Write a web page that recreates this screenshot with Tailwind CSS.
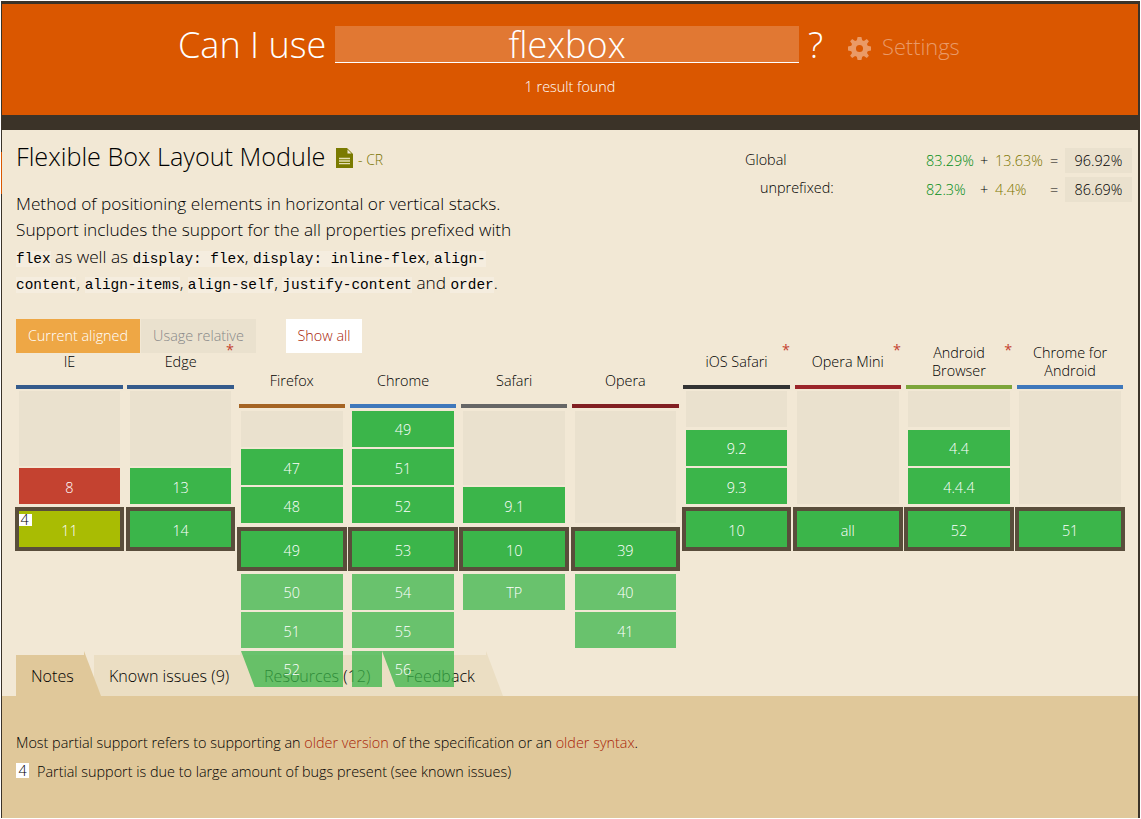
<!DOCTYPE html>
<html lang="en">
<head>
<meta charset="utf-8">
<title>Can I use... flexbox</title>
<script src="https://cdn.jsdelivr.net/npm/@tailwindcss/browser@4"></script>
</head>
<body class="h-[819px] overflow-hidden bg-white font-['Open_Sans',sans-serif] text-black">
<div class="relative ml-px mt-px h-[817px] w-[1139px] bg-[#3b3328] pl-px pr-[2px] pt-[3px]">
  <div class="absolute left-0 top-[151px] h-[42px] w-px bg-[#da5700]"></div>

  <header class="h-[111px] bg-[#da5700] text-white">
    <div class="flex h-[59px] items-start pl-[176px] pt-[22px] text-[36px] font-light leading-[38px]">
      <span class="w-[157px] whitespace-nowrap">Can I use</span>
      <div class="h-[37px] w-[464px] border-b border-white bg-white/20 text-center">flexbox</div>
      <span class="ml-[9px] w-[40px]">?</span>
      <svg class="mt-[11px] size-[23px]" viewBox="-12 -12 24 24" fill="#ea9a66">
        <path fill-rule="evenodd" d="M-2-12H2L2.8-8.6 4.6-7.8 7.6-9.8 9.8-7.6 7.8-4.6 8.6-2.8 12-2V2L8.6 2.8 7.8 4.6 9.8 7.6 7.6 9.8 4.6 7.8 2.8 8.6 2 12H-2L-2.8 8.6-4.6 7.8-7.6 9.8-9.8 7.6-7.8 4.6-8.6 2.8-12 2V-2L-8.6-2.8-7.8-4.6-9.8-7.6-7.6-9.8-4.6-7.8-2.8-8.6ZM0-3.7A3.7 3.7 0 1 0 0 3.7 3.7 3.7 0 1 0 0-3.7Z"/>
      </svg>
      <span class="ml-[11px] mt-[2px] text-[21.8px] text-[#e99a68]">Settings</span>
    </div>
    <div class="pt-[14px] text-center text-[14.4px] font-light leading-5">1 result found</div>
  </header>

  <main class="mt-[15px] flex h-[688px] flex-col bg-[#f2e8d5]">
    <section class="flex h-[189px] pl-[14px]">
      <div class="w-[510px] pt-[9px]">
        <h1 class="flex h-[34px] items-center whitespace-nowrap text-[25.2px] font-light leading-[34px]">
          <span class="w-[320px]">Flexible Box Layout Module</span>
          <svg class="mt-[3px] h-[20px] w-[17px]" viewBox="0 0 17 20"><path fill="#7a7a00" d="M0 0H11L17 6V20H0Z"/><path fill="#f2e8d5" d="M11.5 1.5V5.5H15.5Z"/><path stroke="#e5e0b5" stroke-width="1.3" d="M3 10.5H14M3 13H14M3 15.7H14"/></svg>
          <span class="ml-[5px] mt-[8px] text-[14px] text-[#7a7400]">- CR</span>
        </h1>
        <p class="mt-[18px] whitespace-nowrap text-[17.25px] font-light leading-[26.3px] [&_code]:bg-[#f5eddf] [&_code]:font-['Liberation_Mono',monospace] [&_code]:text-[14.4px] [&_code]:leading-none">Method of positioning elements in horizontal or vertical stacks.<br>Support includes the support for the all properties prefixed with<br><code>flex</code> as well as <code>display: flex</code>, <code>display: inline-flex</code>, <code>align-</code><br><code>content</code>, <code>align-items</code>, <code>align-self</code>, <code>justify-content</code> and <code>order</code>.</p>
      </div>
      <div class="ml-[219px] pt-[18px] text-[14.4px] font-light">
        <div class="flex h-[25px] items-center whitespace-nowrap leading-[25px]">
          <span class="-mt-[2px] w-[181px]">Global</span><span class="w-[54px] text-[#008c14]">83.29%</span><span class="w-[15px]">+</span><span class="w-[55px] text-[#7d7600]">13.63%</span><span class="w-[15px]">=</span><span class="w-[67px] bg-[#eae1ce] text-center">96.92%</span>
        </div>
        <div class="mt-[4px] flex h-[25px] items-center whitespace-nowrap leading-[25px]">
          <span class="-mt-[4px] w-[181px] pl-[15px]">unprefixed:</span><span class="w-[54px] text-[#008c14]">82.3%</span><span class="w-[15px]">+</span><span class="w-[55px] text-[#7d7600]">4.4%</span><span class="w-[15px]">=</span><span class="w-[67px] bg-[#eae1ce] text-center">86.69%</span>
        </div>
      </div>
    </section>

    <nav class="flex h-[34px] pl-[14px] text-center text-[14.4px] font-light leading-[34px]">
      <span class="w-[124px] bg-[#eea745] text-white">Current aligned</span>
      <span class="ml-px w-[115px] bg-[#eae1ce] text-[#888]">Usage relative</span>
      <span class="ml-[30px] w-[76px] bg-white text-[#a82408]">Show all</span>
    </nav>

    <section class="relative z-10 flex h-[302px] pl-[14.2px] text-center text-[14.4px] font-light leading-[18px]">
      <div class="w-[111.2px] shrink-0">
        <div class="mr-[4.7px] h-[36px] border-b-4 border-[#355b8c]">IE</div>
        <div class="ml-[2.5px] w-[101.5px] text-white">
          <div class="mt-[2px] h-[75px] bg-[#eae1ce]"></div>
          <div class="mt-[2px] h-[36px] bg-[#c44230] leading-[40px]">8</div>
          <div class="relative -mx-1 mt-[3px] h-[44px] border-4 border-[#594d3b] bg-[#a9bc03] leading-[39px]">11<span class="absolute left-0 top-[3px] h-[12px] w-[13px] bg-white pr-px leading-[12px] text-black">4</span></div>
        </div>
      </div>
      <div class="w-[111.2px] shrink-0">
        <div class="relative mr-[4.7px] h-[36px] border-b-4 border-[#355b8c]">Edge<span class="absolute -top-[12px] right-0 font-normal text-[#c44230]">*</span></div>
        <div class="ml-[2.5px] w-[101.5px] text-white">
          <div class="mt-[2px] h-[75px] bg-[#eae1ce]"></div>
          <div class="mt-[2px] h-[36px] bg-[#3bb54a] leading-[40px]">13</div>
          <div class="-mx-1 mt-[3px] h-[44px] border-4 border-[#594d3b] bg-[#3bb54a] leading-[39px]">14</div>
        </div>
      </div>
      <div class="w-[111.2px] shrink-0">
        <div class="mr-[4.7px] h-[55px] border-b-4 border-[#a56423] pt-[19px]">Firefox</div>
        <div class="ml-[2.5px] w-[101.5px] text-white">
          <div class="mt-[3px] h-[36px] bg-[#eae1ce]"></div>
          <div class="mt-[2px] h-[36px] bg-[#3bb54a] leading-[40px]">47</div>
          <div class="mt-[2px] h-[36px] bg-[#3bb54a] leading-[40px]">48</div>
          <div class="-mx-1 mt-[4px] h-[44px] border-4 border-[#594d3b] bg-[#3bb54a] leading-[39px]">49</div>
          <div class="mt-[3px] h-[36px] bg-[#3bb54a]/75 leading-[38px]">50</div>
          <div class="mt-[2px] h-[36px] bg-[#3bb54a]/75 leading-[40px]">51</div>
          <div class="mt-[3px] h-[36px] bg-[#3bb54a]/75 leading-[38px]">52</div>
        </div>
      </div>
      <div class="w-[111.2px] shrink-0">
        <div class="mr-[4.7px] h-[55px] border-b-4 border-[#3f78bb] pt-[19px]">Chrome</div>
        <div class="ml-[2.5px] w-[101.5px] text-white">
          <div class="mt-[3px] h-[36px] bg-[#3bb54a] leading-[38px]">49</div>
          <div class="mt-[2px] h-[36px] bg-[#3bb54a] leading-[40px]">51</div>
          <div class="mt-[2px] h-[36px] bg-[#3bb54a] leading-[40px]">52</div>
          <div class="-mx-1 mt-[4px] h-[44px] border-4 border-[#594d3b] bg-[#3bb54a] leading-[39px]">53</div>
          <div class="mt-[3px] h-[36px] bg-[#3bb54a]/75 leading-[38px]">54</div>
          <div class="mt-[2px] h-[36px] bg-[#3bb54a]/75 leading-[40px]">55</div>
          <div class="mt-[3px] h-[36px] bg-[#3bb54a]/75 leading-[38px]">56</div>
        </div>
      </div>
      <div class="w-[111.2px] shrink-0">
        <div class="mr-[4.7px] h-[55px] border-b-4 border-[#666] pt-[19px]">Safari</div>
        <div class="ml-[2.5px] w-[101.5px] text-white">
          <div class="mt-[3px] h-[74px] bg-[#eae1ce]"></div>
          <div class="mt-[2px] h-[36px] bg-[#3bb54a] leading-[40px]">9.1</div>
          <div class="-mx-1 mt-[4px] h-[44px] border-4 border-[#594d3b] bg-[#3bb54a] leading-[39px]">10</div>
          <div class="mt-[3px] h-[36px] bg-[#3bb54a]/75 leading-[38px]">TP</div>
        </div>
      </div>
      <div class="w-[111.2px] shrink-0">
        <div class="mr-[4.7px] h-[55px] border-b-4 border-[#821f22] pt-[19px]">Opera</div>
        <div class="ml-[2.5px] w-[101.5px] text-white">
          <div class="mt-[3px] h-[112px] bg-[#eae1ce]"></div>
          <div class="-mx-1 mt-[4px] h-[44px] border-4 border-[#594d3b] bg-[#3bb54a] leading-[39px]">39</div>
          <div class="mt-[3px] h-[36px] bg-[#3bb54a]/75 leading-[38px]">40</div>
          <div class="mt-[2px] h-[36px] bg-[#3bb54a]/75 leading-[40px]">41</div>
        </div>
      </div>
      <div class="w-[111.2px] shrink-0">
        <div class="relative mr-[4.7px] h-[36px] border-b-4 border-[#333]">iOS Safari<span class="absolute -top-[12px] right-0 font-normal text-[#c44230]">*</span></div>
        <div class="ml-[2.5px] w-[101.5px] text-white">
          <div class="mt-[2px] h-[36px] bg-[#eae1ce]"></div>
          <div class="mt-[3px] h-[36px] bg-[#3bb54a] leading-[38px]">9.2</div>
          <div class="mt-[2px] h-[36px] bg-[#3bb54a] leading-[40px]">9.3</div>
          <div class="-mx-1 mt-[3px] h-[44px] border-4 border-[#594d3b] bg-[#3bb54a] leading-[39px]">10</div>
        </div>
      </div>
      <div class="w-[111.2px] shrink-0">
        <div class="relative mr-[4.7px] h-[36px] border-b-4 border-[#9b252a]">Opera Mini<span class="absolute -top-[12px] right-0 font-normal text-[#c44230]">*</span></div>
        <div class="ml-[2.5px] w-[101.5px] text-white">
          <div class="mt-[2px] h-[113px] bg-[#eae1ce]"></div>
          <div class="-mx-1 mt-[3px] h-[44px] border-4 border-[#594d3b] bg-[#3bb54a] leading-[39px]">all</div>
        </div>
      </div>
      <div class="w-[111.2px] shrink-0">
        <div class="relative mr-[4.7px] flow-root h-[36px] border-b-4 border-[#7da53a]"><div class="-mt-[9px]">Android<br>Browser</div><span class="absolute -top-[12px] right-0 font-normal text-[#c44230]">*</span></div>
        <div class="ml-[2.5px] w-[101.5px] text-white">
          <div class="mt-[2px] h-[36px] bg-[#eae1ce]"></div>
          <div class="mt-[3px] h-[36px] bg-[#3bb54a] leading-[38px]">4.4</div>
          <div class="mt-[2px] h-[36px] bg-[#3bb54a] leading-[40px]">4.4.4</div>
          <div class="-mx-1 mt-[3px] h-[44px] border-4 border-[#594d3b] bg-[#3bb54a] leading-[39px]">52</div>
        </div>
      </div>
      <div class="w-[111.2px] shrink-0">
        <div class="mr-[4.7px] flow-root h-[36px] border-b-4 border-[#3f78bb]"><div class="-mt-[9px]">Chrome for<br>Android</div></div>
        <div class="ml-[2.5px] w-[101.5px] text-white">
          <div class="mt-[2px] h-[113px] bg-[#eae1ce]"></div>
          <div class="-mx-1 mt-[3px] h-[44px] border-4 border-[#594d3b] bg-[#3bb54a] leading-[39px]">51</div>
        </div>
      </div>
    </section>

    <nav class="relative flex h-[41px] whitespace-nowrap pl-[14px] text-[16.1px] font-light leading-[42px]">
      <div class="w-[69px] bg-[#e0c89a] pl-[15px]">Notes</div>
      <div class="ml-[9px] w-[147px] bg-[#ebdec3] pl-[15px]">Known issues (9)</div>
      <div class="w-[141px] bg-[#ebdec3] pl-[23px]">Resources (12)</div>
      <div class="w-[104px] bg-[#ebdec3] pl-[24px]">Feedback</div>
      <!-- slanted right edges of the tabs -->
      <svg class="absolute -top-[4px] left-0 z-20 h-[45px] w-[520px]" viewBox="0 0 520 45">
        <path fill="#e0c89a" d="M82 4V0L99 45H82Z"/>
        <path fill="#ebdec3" d="M238 4L239 0 256 45H238ZM380 4V0L397 45H380ZM484 4V0L501 45H484Z"/>
      </svg>
    </nav>

    <section class="flex-1 bg-[#e0c89a] pl-[14px] pt-[37px] text-[14.4px] font-light leading-5">
      <p>Most partial support refers to supporting an <span class="text-[#a82408]">older version</span> of the specification or an <span class="text-[#a82408]">older syntax</span>.</p>
      <p class="mt-[9px] flex items-center"><span class="-mt-[3px] mr-[8px] h-[15px] w-[13px] bg-white text-center leading-[15px]">4</span>Partial support is due to large amount of bugs present (see known issues)</p>
    </section>
  </main>
</div>
</body>
</html>
